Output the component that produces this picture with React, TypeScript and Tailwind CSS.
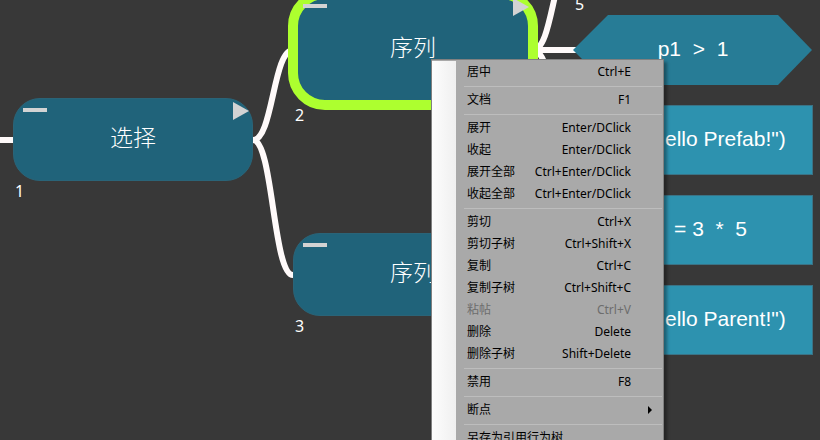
import type { ReactNode } from "react";

type MenuEntry = { label: string; keys?: string; disabled?: boolean; submenu?: boolean };

const menuGroups: MenuEntry[][] = [
  [{ label: "居中", keys: "Ctrl+E" }],
  [{ label: "文档", keys: "F1" }],
  [
    { label: "展开", keys: "Enter/DClick" },
    { label: "收起", keys: "Enter/DClick" },
    { label: "展开全部", keys: "Ctrl+Enter/DClick" },
    { label: "收起全部", keys: "Ctrl+Enter/DClick" },
  ],
  [
    { label: "剪切", keys: "Ctrl+X" },
    { label: "剪切子树", keys: "Ctrl+Shift+X" },
    { label: "复制", keys: "Ctrl+C" },
    { label: "复制子树", keys: "Ctrl+Shift+C" },
    { label: "粘帖", keys: "Ctrl+V", disabled: true },
    { label: "删除", keys: "Delete" },
    { label: "删除子树", keys: "Shift+Delete" },
  ],
  [{ label: "禁用", keys: "F8" }],
  [{ label: "断点", submenu: true }],
  [{ label: "另存为引用行为树" }],
];

function Edges() {
  return (
    <svg className="absolute inset-0 h-full w-full" fill="none" stroke="#fffafa" strokeWidth="6" aria-hidden="true">
      <path d="M0 140H13" />
      <path d="M253 140C273 140 273 50 293 50" />
      <path d="M253 140C273 140 273 275 293 275" />
      <path d="M533 50C553 50 553 -40 573 -40" />
      <path d="M533 50H576" />
      <path d="M533 50C553 50 553 140 573 140" />
      <path d="M533 275C553 275 553 230 573 230" />
      <path d="M533 275C553 275 553 320 573 320" />
    </svg>
  );
}

/* Collapse bar at the left and expand arrow at the right of a node's head */
function NodeMarks() {
  return (
    <div className="absolute inset-x-0 top-0 flex items-start justify-between pt-1 pr-1 pl-2.5">
      <span className="mt-1.5 h-1 w-6 bg-[#d3d3d3]" />
      <svg className="h-[18px] w-4" viewBox="0 0 16 18" fill="#d3d3d3" aria-hidden="true">
        <path d="M0 0L16 9L0 18Z" />
      </svg>
    </div>
  );
}

function BranchNode({ place, index, title, selected }: { place: string; index: number; title: string; selected?: boolean }) {
  return (
    <div className={`absolute w-60 ${place}`}>
      <div
        className={
          selected
            ? "absolute -inset-[5px] rounded-[37px] border-10 border-[#adff2f] bg-[#20637a]"
            : "absolute inset-0 rounded-[27px] border border-[#2a6478] bg-[#20637a]"
        }
      />
      <NodeMarks />
      <div className="relative flex h-full items-center justify-center pb-0.5 font-['Liberation_Sans','Noto_Sans_CJK_SC',sans-serif] text-[23px] font-light text-white">
        {title}
      </div>
      <span className="absolute top-full left-0.5 text-base leading-5 text-white">{index}</span>
    </div>
  );
}

function LeafNode({ children }: { children: ReactNode }) {
  return (
    <div className="flex h-[70px] items-center justify-center border border-[#3a7386] bg-[#2d92af] pb-0.5">
      {children}
    </div>
  );
}

function ConditionNode({ children }: { children: ReactNode }) {
  return (
    <div className="relative flex h-[70px] items-center justify-center pb-0.5">
      <svg className="absolute inset-0 h-full w-full" viewBox="0 0 240 70" aria-hidden="true">
        <path d="M0 35L35 0H205L239 35L205 70H35Z" fill="#277c96" />
      </svg>
      <span className="relative">{children}</span>
    </div>
  );
}

function MenuItem({ entry }: { entry: MenuEntry }) {
  return (
    <button
      type="button"
      role="menuitem"
      disabled={entry.disabled}
      className="flex h-[22px] w-full items-center justify-between pt-0.5 pr-8 pl-[11px] text-black disabled:text-[#6d6d6d]"
    >
      <span>{entry.label}</span>
      {entry.keys && <span>{entry.keys}</span>}
      {entry.submenu && (
        <svg className="-mr-[21px] h-2 w-1" viewBox="0 0 4 8" aria-hidden="true">
          <path d="M0 0L4 4L0 8Z" fill="black" />
        </svg>
      )}
    </button>
  );
}

function ContextMenu() {
  return (
    <div
      role="menu"
      className="absolute top-[59px] left-[431px] flex w-[233px] border border-[#808080] bg-[#a9a9a9] text-xs leading-5 shadow-[3px_3px_3px_rgba(0,0,0,0.35)]"
    >
      <div className="mt-px w-6 bg-linear-to-r from-[#fdfdfd] to-[#efefef]" />
      <div className="flex-1">
        {menuGroups.map((group, i) => (
          <div key={group[0].label}>
            {i > 0 && (
              <div role="separator" className="flex h-1.5 items-end pr-px pb-px pl-2">
                <span className="h-px w-full bg-[#bdbdbd]" />
              </div>
            )}
            {group.map((entry) => (
              <MenuItem key={entry.label} entry={entry} />
            ))}
          </div>
        ))}
      </div>
    </div>
  );
}

export default function App() {
  return (
    <main className="relative h-screen w-full overflow-hidden bg-[#383838] font-['Noto_Sans','Noto_Sans_CJK_SC',sans-serif]">
      <Edges />
      <BranchNode place="top-[98px] left-[13px] h-[83px]" index={1} title="选择" />
      <BranchNode place="-top-1.5 left-[293px] h-[111px]" index={2} title="序列" selected />
      <BranchNode place="top-[233px] left-[293px] h-[83px]" index={3} title="序列" />
      <span className="absolute -top-1.5 left-[575px] text-base leading-5 text-white">5</span>
      <div className="absolute top-[15px] left-[573px] flex w-60 flex-col gap-5 font-['Liberation_Sans',sans-serif] text-[21px] whitespace-pre text-white">
        <ConditionNode>{"p1  >  1"}</ConditionNode>
        <LeafNode>{'Log("Hello Prefab!")'}</LeafNode>
        <LeafNode>{"p2  = 3  *  5"}</LeafNode>
        <LeafNode>{'Log("Hello Parent!")'}</LeafNode>
      </div>
      <ContextMenu />
    </main>
  );
}
